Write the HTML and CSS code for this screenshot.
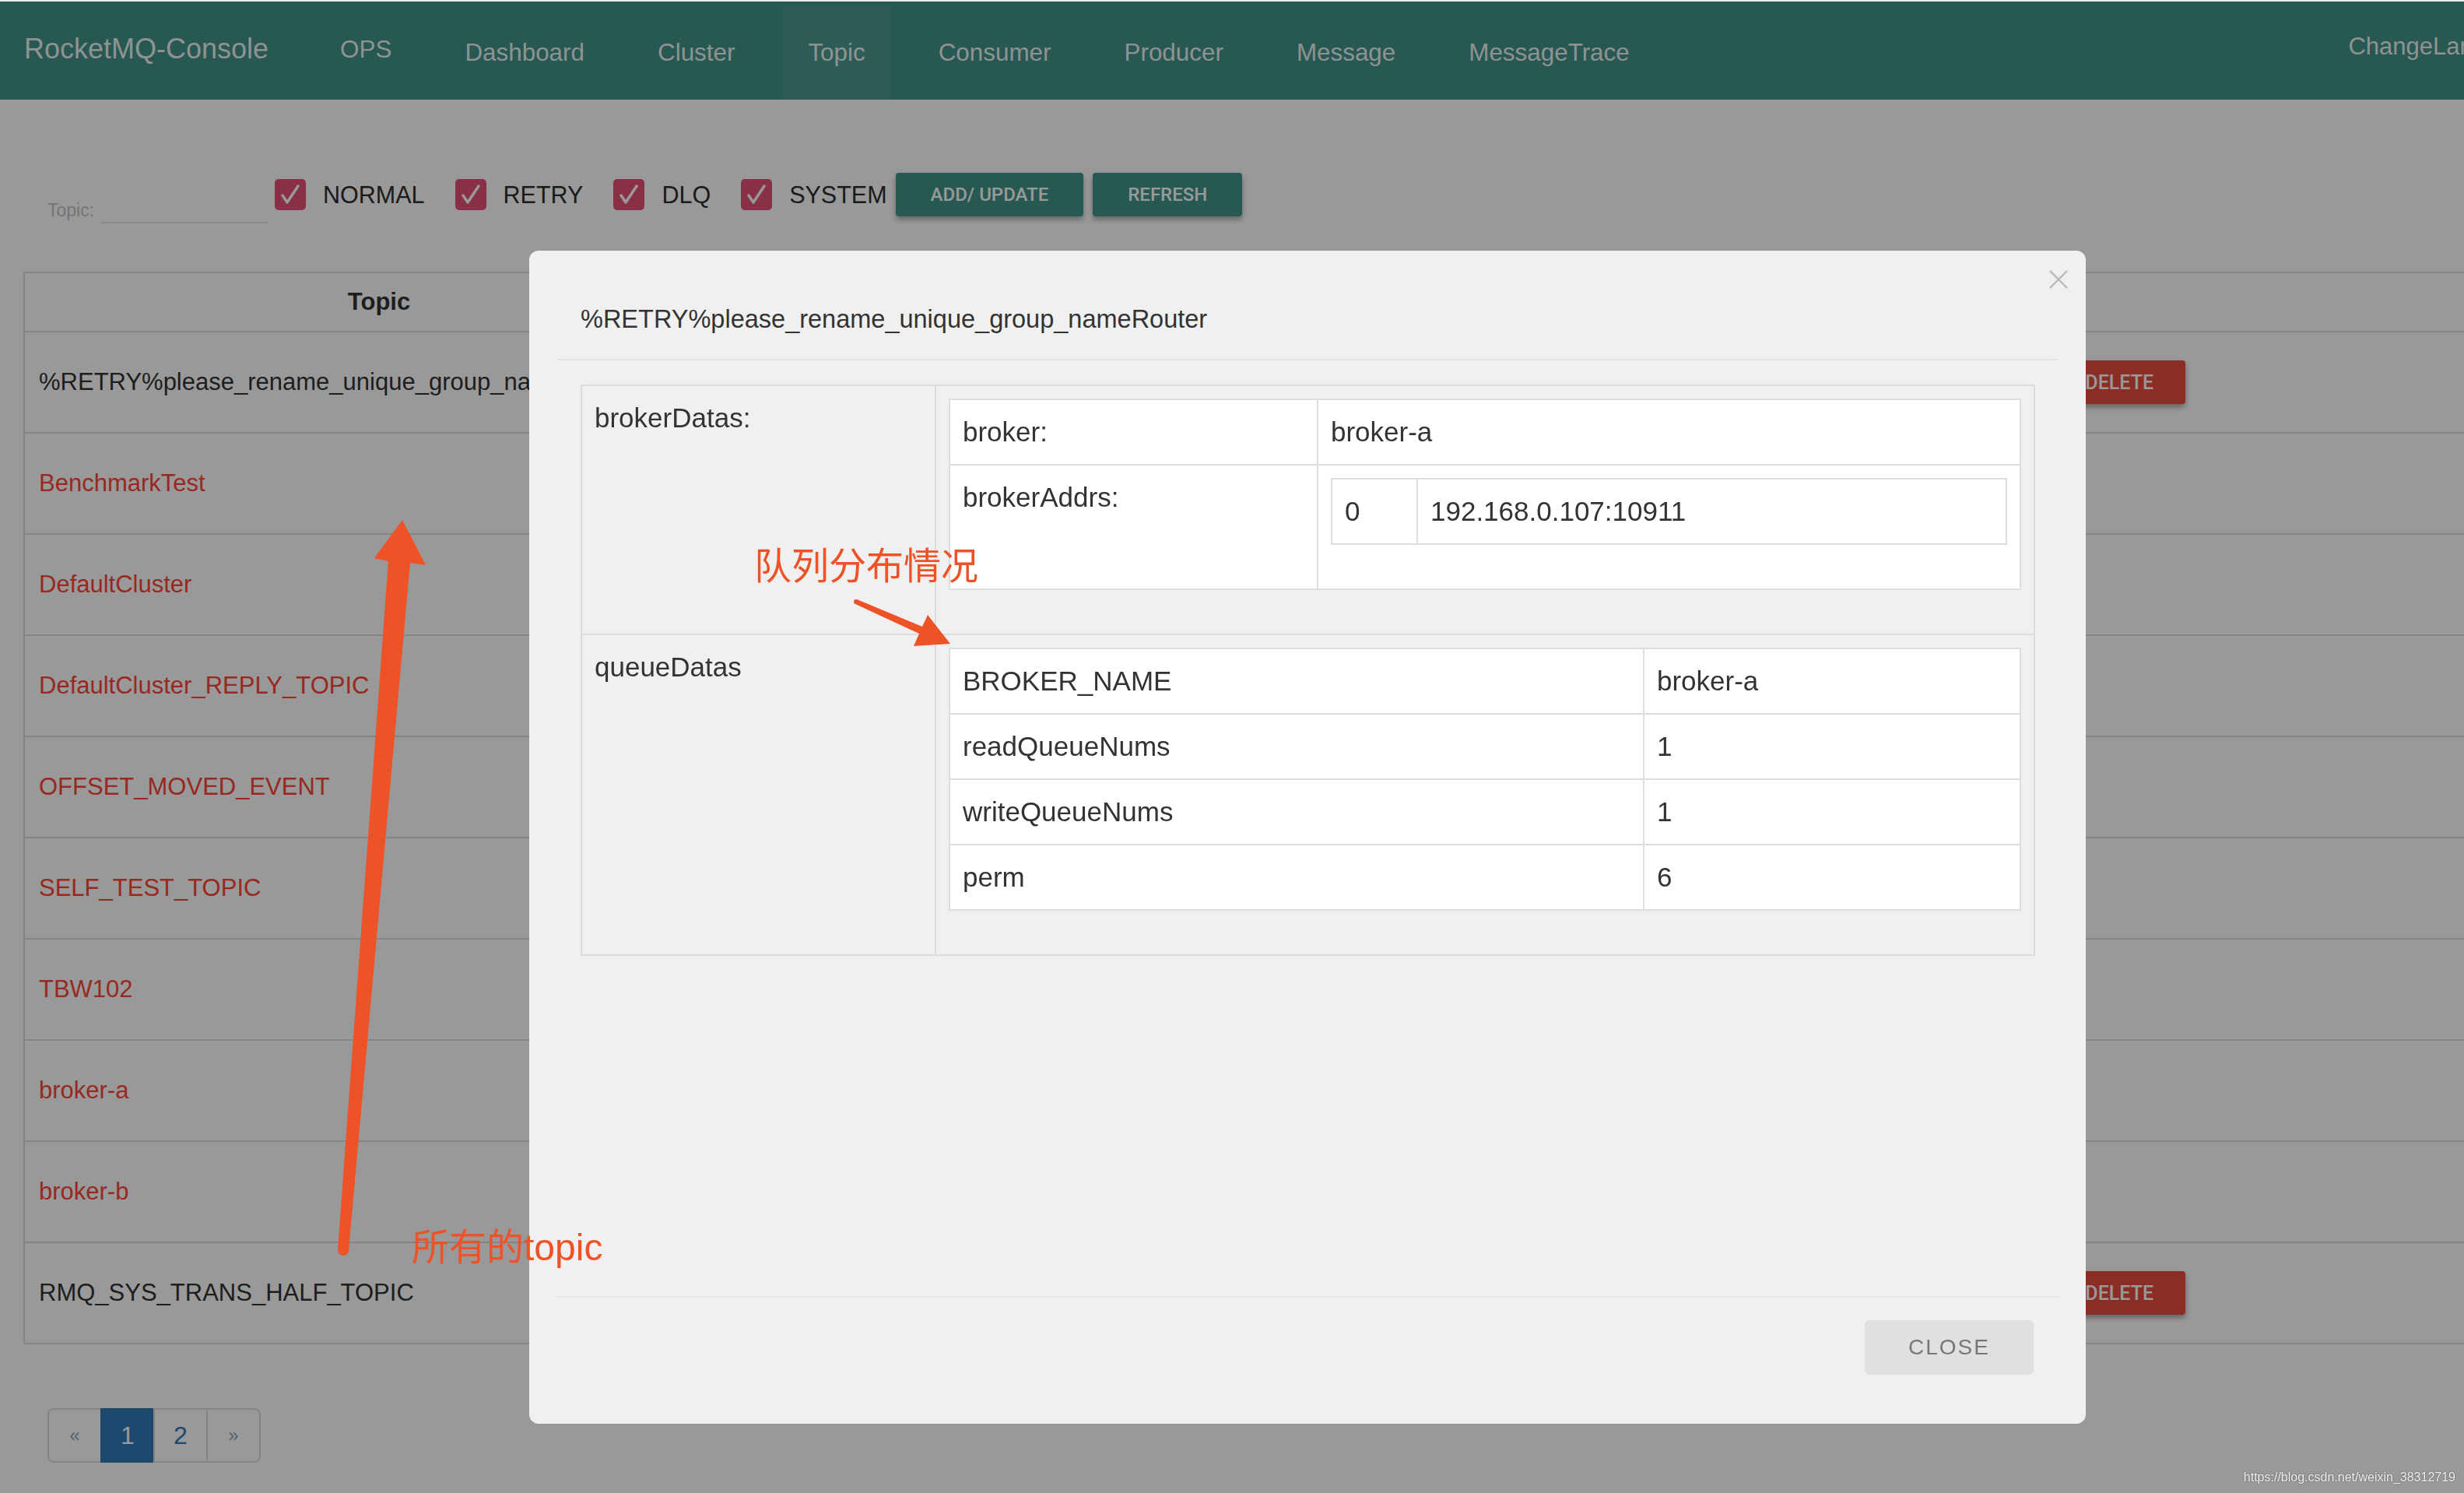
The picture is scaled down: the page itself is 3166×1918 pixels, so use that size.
FILE: index.html
```html
<!DOCTYPE html>
<html lang="en">
<head>
<meta charset="utf-8">
<title>RocketMQ-Console</title>
<link rel="stylesheet" href="styles.css">
</head>
<body>
<div class="page">
  <nav class="navbar">
    <a class="brand">RocketMQ-Console</a>
    <ul class="nav">
      <li class="nav-item nav-ops">OPS</li>
      <li class="nav-item">Dashboard</li>
      <li class="nav-item">Cluster</li>
      <li class="nav-item active">Topic</li>
      <li class="nav-item">Consumer</li>
      <li class="nav-item">Producer</li>
      <li class="nav-item">Message</li>
      <li class="nav-item">MessageTrace</li>
    </ul>
    <div class="nav-right">ChangeLanguage</div>
  </nav>

  <main class="content">
    <div class="toolbar">
      <div class="topic-field">
        <label class="field-label">Topic:</label>
        <span class="field-input"></span>
      </div>
      <div class="check"><span class="check-box"><svg viewBox="0 0 40 40" width="40" height="40"><polyline points="10,21 16,30 30,9" fill="none" stroke="#fff" stroke-width="3.5" stroke-linecap="round" stroke-linejoin="round"/></svg></span><span class="check-text">NORMAL</span></div>
      <div class="check"><span class="check-box"><svg viewBox="0 0 40 40" width="40" height="40"><polyline points="10,21 16,30 30,9" fill="none" stroke="#fff" stroke-width="3.5" stroke-linecap="round" stroke-linejoin="round"/></svg></span><span class="check-text">RETRY</span></div>
      <div class="check"><span class="check-box"><svg viewBox="0 0 40 40" width="40" height="40"><polyline points="10,21 16,30 30,9" fill="none" stroke="#fff" stroke-width="3.5" stroke-linecap="round" stroke-linejoin="round"/></svg></span><span class="check-text">DLQ</span></div>
      <div class="check check-last"><span class="check-box"><svg viewBox="0 0 40 40" width="40" height="40"><polyline points="10,21 16,30 30,9" fill="none" stroke="#fff" stroke-width="3.5" stroke-linecap="round" stroke-linejoin="round"/></svg></span><span class="check-text">SYSTEM</span></div>
      <button class="btn btn-teal">ADD/ UPDATE</button>
      <button class="btn btn-teal">REFRESH</button>
    </div>

    <table class="topic-table">
      <thead>
        <tr><th class="col-topic">Topic</th><th>Operation</th></tr>
      </thead>
      <tbody>
        <tr><td>%RETRY%please_rename_unique_group_name</td><td class="ops"><div class="ops-row"><button class="btn btn-teal">STATUS</button><button class="btn btn-teal">ROUTER</button><button class="btn btn-teal">CONSUMER MANAGE</button><button class="btn btn-teal">TOPIC CONFIG</button><button class="btn btn-red btn-delete">DELETE</button></div></td></tr>
        <tr><td class="link">BenchmarkTest</td><td class="ops"><div class="ops-row"><button class="btn btn-teal">STATUS</button><button class="btn btn-teal">ROUTER</button><button class="btn btn-teal">CONSUMER MANAGE</button></div></td></tr>
        <tr><td class="link">DefaultCluster</td><td class="ops"><div class="ops-row"><button class="btn btn-teal">STATUS</button><button class="btn btn-teal">ROUTER</button><button class="btn btn-teal">CONSUMER MANAGE</button></div></td></tr>
        <tr><td class="link">DefaultCluster_REPLY_TOPIC</td><td class="ops"><div class="ops-row"><button class="btn btn-teal">STATUS</button><button class="btn btn-teal">ROUTER</button><button class="btn btn-teal">CONSUMER MANAGE</button></div></td></tr>
        <tr><td class="link">OFFSET_MOVED_EVENT</td><td class="ops"><div class="ops-row"><button class="btn btn-teal">STATUS</button><button class="btn btn-teal">ROUTER</button><button class="btn btn-teal">CONSUMER MANAGE</button></div></td></tr>
        <tr><td class="link">SELF_TEST_TOPIC</td><td class="ops"><div class="ops-row"><button class="btn btn-teal">STATUS</button><button class="btn btn-teal">ROUTER</button><button class="btn btn-teal">CONSUMER MANAGE</button></div></td></tr>
        <tr><td class="link">TBW102</td><td class="ops"><div class="ops-row"><button class="btn btn-teal">STATUS</button><button class="btn btn-teal">ROUTER</button><button class="btn btn-teal">CONSUMER MANAGE</button></div></td></tr>
        <tr><td class="link">broker-a</td><td class="ops"><div class="ops-row"><button class="btn btn-teal">STATUS</button><button class="btn btn-teal">ROUTER</button><button class="btn btn-teal">CONSUMER MANAGE</button></div></td></tr>
        <tr><td class="link">broker-b</td><td class="ops"><div class="ops-row"><button class="btn btn-teal">STATUS</button><button class="btn btn-teal">ROUTER</button><button class="btn btn-teal">CONSUMER MANAGE</button></div></td></tr>
        <tr><td>RMQ_SYS_TRANS_HALF_TOPIC</td><td class="ops"><div class="ops-row"><button class="btn btn-teal">STATUS</button><button class="btn btn-teal">ROUTER</button><button class="btn btn-teal">CONSUMER MANAGE</button><button class="btn btn-teal">TOPIC CONFIG</button><button class="btn btn-red btn-delete">DELETE</button></div></td></tr>
      </tbody>
    </table>

    <ul class="pagination">
      <li class="page-link page-arrow">&laquo;</li>
      <li class="page-link active">1</li>
      <li class="page-link">2</li>
      <li class="page-link page-arrow">&raquo;</li>
    </ul>
  </main>
</div>

<div class="backdrop"></div>

<div class="modal">
  <div class="modal-header">
    <h4 class="modal-title">%RETRY%please_rename_unique_group_nameRouter</h4>
    <svg class="modal-close" viewBox="0 0 26 24" width="26" height="24"><path d="M2 1 L24 23 M24 1 L2 23" stroke="#b8b8b8" stroke-width="2.4" fill="none"/></svg>
  </div>
  <div class="modal-body">
    <table class="kv kv-outer">
      <tr>
        <td class="w-outer">brokerDatas:</td>
        <td>
          <table class="kv kv-white">
            <tr><td class="w-broker">broker:</td><td>broker-a</td></tr>
            <tr><td>brokerAddrs:</td><td>
              <table class="kv kv-white">
                <tr><td class="w-addr">0</td><td>192.168.0.107:10911</td></tr>
              </table>
            </td></tr>
          </table>
        </td>
      </tr>
      <tr>
        <td>queueDatas</td>
        <td>
          <table class="kv kv-white">
            <tr><td class="w-queue">BROKER_NAME</td><td>broker-a</td></tr>
            <tr><td>readQueueNums</td><td>1</td></tr>
            <tr><td>writeQueueNums</td><td>1</td></tr>
            <tr><td>perm</td><td>6</td></tr>
          </table>
        </td>
      </tr>
    </table>
  </div>
  <div class="modal-footer">
    <button class="btn-close">CLOSE</button>
  </div>
</div>

<svg class="annot" width="3166" height="1918" viewBox="0 0 3166 1918">
  <polygon points="517,668 547,726 527,723 448,1606 434,1605 499,721 481,717" fill="#ee5227"/>
  <circle cx="441" cy="1606" r="7" fill="#ee5227"/>
  <polygon points="1221,827 1174,830 1181,814 1099,776 1101,770 1185,805 1192,790" fill="#ee5227"/>
  <circle cx="1100" cy="773" r="3" fill="#ee5227"/>
</svg>
<div class="note note-queue">队列分布情况</div>
<div class="note note-topic">所有的<span class="note-latin">topic</span></div>
<div class="watermark">https://blog.csdn.net/weixin_38312719</div>
</body>
</html>
```

FILE: styles.css
```css
* { box-sizing: border-box; }
html, body { margin: 0; padding: 0; }
body {
  width: 3166px;
  height: 1918px;
  overflow: hidden;
  position: relative;
  background: #e9e9e9;
  font-family: "Liberation Sans", Arial, Helvetica, sans-serif;
}
.page {
  margin-top: 2px;
  width: 3296px;
  height: 1916px;
  background: #fff;
}

/* navbar */
.navbar {
  display: flex;
  align-items: flex-end;
  height: 126px;
  padding-left: 31px;
  background: #419387;
  color: rgba(255, 255, 255, 0.92);
}
.brand {
  align-self: center;
  font-size: 36px;
  line-height: 44px;
  margin: 0 60px 4px 0;
}
.nav {
  display: flex;
  list-style: none;
  margin: 0;
  padding: 0;
}
.nav-item {
  height: 120px;
  line-height: 120px;
  padding: 0 32px;
  margin-right: 30px;
  font-size: 31.4px;
}
.nav-ops { line-height: 112px; }
.nav-item.active { background: #4e9b91; }
.nav-right {
  margin-left: auto;
  align-self: center;
  margin-bottom: 10px;
  padding: 0 32px;
  font-size: 31px;
  line-height: 40px;
  white-space: nowrap;
}

/* toolbar */
.content { padding: 0 30px; }
.toolbar {
  display: flex;
  align-items: center;
  height: 56px;
  margin-top: 94px;
  padding-left: 31px;
}
.topic-field {
  align-self: flex-end;
  display: flex;
  align-items: flex-end;
  margin: 0 8px -9px 0;
}
.field-label {
  font-size: 23px;
  line-height: 23px;
  color: #c4c4c4;
  margin: 0 9px 5px 0;
}
.field-input {
  display: block;
  width: 215px;
  height: 34px;
  border-bottom: 2px solid #e6e6e6;
}
.check {
  display: flex;
  align-items: center;
  margin-right: 39px;
}
.check-last { margin-right: 11px; }
.check-box {
  display: block;
  width: 40px;
  height: 40px;
  border-radius: 5px;
  background: #e65075;
  margin-right: 22px;
}
.check-box svg { display: block; }
.check-text {
  font-size: 30.5px;
  line-height: 40px;
  color: #2e2e2e;
}
.btn {
  height: 56px;
  padding: 0 45px;
  border: 0;
  border-radius: 4px;
  font-family: Roboto, "Liberation Sans", Arial, sans-serif;
  font-weight: 500;
  font-size: 24px;
  color: #fff;
  white-space: nowrap;
  box-shadow: 0 4px 7px rgba(0, 0, 0, 0.35);
}
.btn-teal { background: #419387; margin-right: 12px; }
.btn-red { background: #e74c3c; font-size: 25px; padding: 0 41px 0 45px; }

/* topic table */
.topic-table {
  width: 3400px;
  margin-top: 71px;
  border: 2px solid #ddd;
  border-collapse: separate;
  border-spacing: 0;
  font-size: 31px;
  color: #333;
}
.topic-table th {
  padding: 15px 18px;
  line-height: 44px;
  font-weight: bold;
  text-align: center;
  border-bottom: 2px solid #ddd;
}
.topic-table .col-topic { width: 910px; }
.topic-table td {
  padding: 40px 18px;
  line-height: 48px;
  vertical-align: middle;
  white-space: nowrap;
}
.topic-table tbody tr + tr td { border-top: 2px solid #ddd; }
.topic-table td.link { color: #fc4538; }
.topic-table td.ops { padding: 36px 620px 36px 18px; }
.ops-row { display: flex; align-items: center; }
.btn-delete { margin-left: auto; }

/* pagination */
.pagination {
  display: flex;
  list-style: none;
  margin: 82px 0 0 31px;
  padding: 0;
}
.page-link {
  width: 70px;
  height: 70px;
  margin-left: -2px;
  border: 2px solid #ddd;
  font-size: 32px;
  line-height: 66px;
  text-align: center;
  color: #337ab7;
}
.page-link:first-child { margin-left: 0; border-radius: 8px 0 0 8px; }
.page-link:last-child { border-radius: 0 8px 8px 0; }
.page-arrow { font-size: 24px; color: #8fa3b8; }
.page-link.active { background: #337ab7; border-color: #337ab7; color: #fff; }

/* backdrop + modal */
.backdrop {
  position: fixed;
  top: 2px; left: 0; right: 0; bottom: 0;
  background: rgba(0, 0, 0, 0.4);
  z-index: 10;
}
.modal {
  position: absolute;
  left: 680px;
  top: 322px;
  width: 2000px;
  height: 1507px;
  z-index: 20;
  display: flex;
  flex-direction: column;
  padding: 0 35px 0 36px;
  background: #f0f0f0;
  border-radius: 12px;
  color: #333;
}
.modal-header {
  display: flex;
  justify-content: space-between;
  align-items: flex-start;
  padding: 0 30px;
  border-bottom: 2px solid #e3e3e3;
}
.modal-title {
  margin: 65px 0 28px;
  font-size: 32.5px;
  line-height: 46px;
  font-weight: normal;
  color: #333;
}
.modal-close {
  display: block;
  margin: 25px -43px 0 0;
}
.modal-body {
  flex: 1;
  padding: 31px 30px 0;
}
.modal-footer {
  display: flex;
  justify-content: flex-end;
  padding: 29px 32px 63px;
  border-top: 2px solid #e6e6e6;
}
.btn-close {
  width: 217px;
  height: 70px;
  border: 0;
  border-radius: 6px;
  background: #e0e0e0;
  color: #777;
  font-family: "Liberation Sans", Arial, sans-serif;
  font-size: 28px;
  letter-spacing: 2px;
}

.kv {
  width: 100%;
  table-layout: fixed;
  border-collapse: separate;
  border-spacing: 0;
  border: 2px solid #ddd;
  margin-bottom: 40px;
  font-size: 35px;
  color: #333;
}
.kv-outer { margin-bottom: 0; }
.kv td {
  padding: 16px;
  line-height: 50px;
  vertical-align: top;
  white-space: nowrap;
}
.kv tr + tr > td { border-top: 2px solid #ddd; }
.kv td + td { border-left: 2px solid #ddd; }
.kv-white { background: #fff; }
.w-outer { width: 453px; }
.w-broker { width: 471px; }
.w-addr { width: 108px; }
.w-queue { width: 890px; }

/* annotations drawn over the screenshot */
.annot {
  position: absolute;
  left: 0;
  top: 0;
  z-index: 30;
}
.note {
  position: absolute;
  z-index: 30;
  font-family: "Noto Sans CJK SC", "Liberation Sans", sans-serif;
  font-size: 48px;
  line-height: 48px;
  color: #ee5227;
  white-space: nowrap;
}
.note-latin { font-family: "Liberation Sans", Arial, sans-serif; }
.note-queue { left: 969px; top: 699px; }
.note-topic { left: 529px; top: 1574px; }
.watermark {
  position: absolute;
  right: 11px;
  bottom: 10px;
  z-index: 30;
  font-size: 16px;
  line-height: 20px;
  color: #eee;
  text-shadow: 0 0 2px rgba(0, 0, 0, 0.5);
}
```
